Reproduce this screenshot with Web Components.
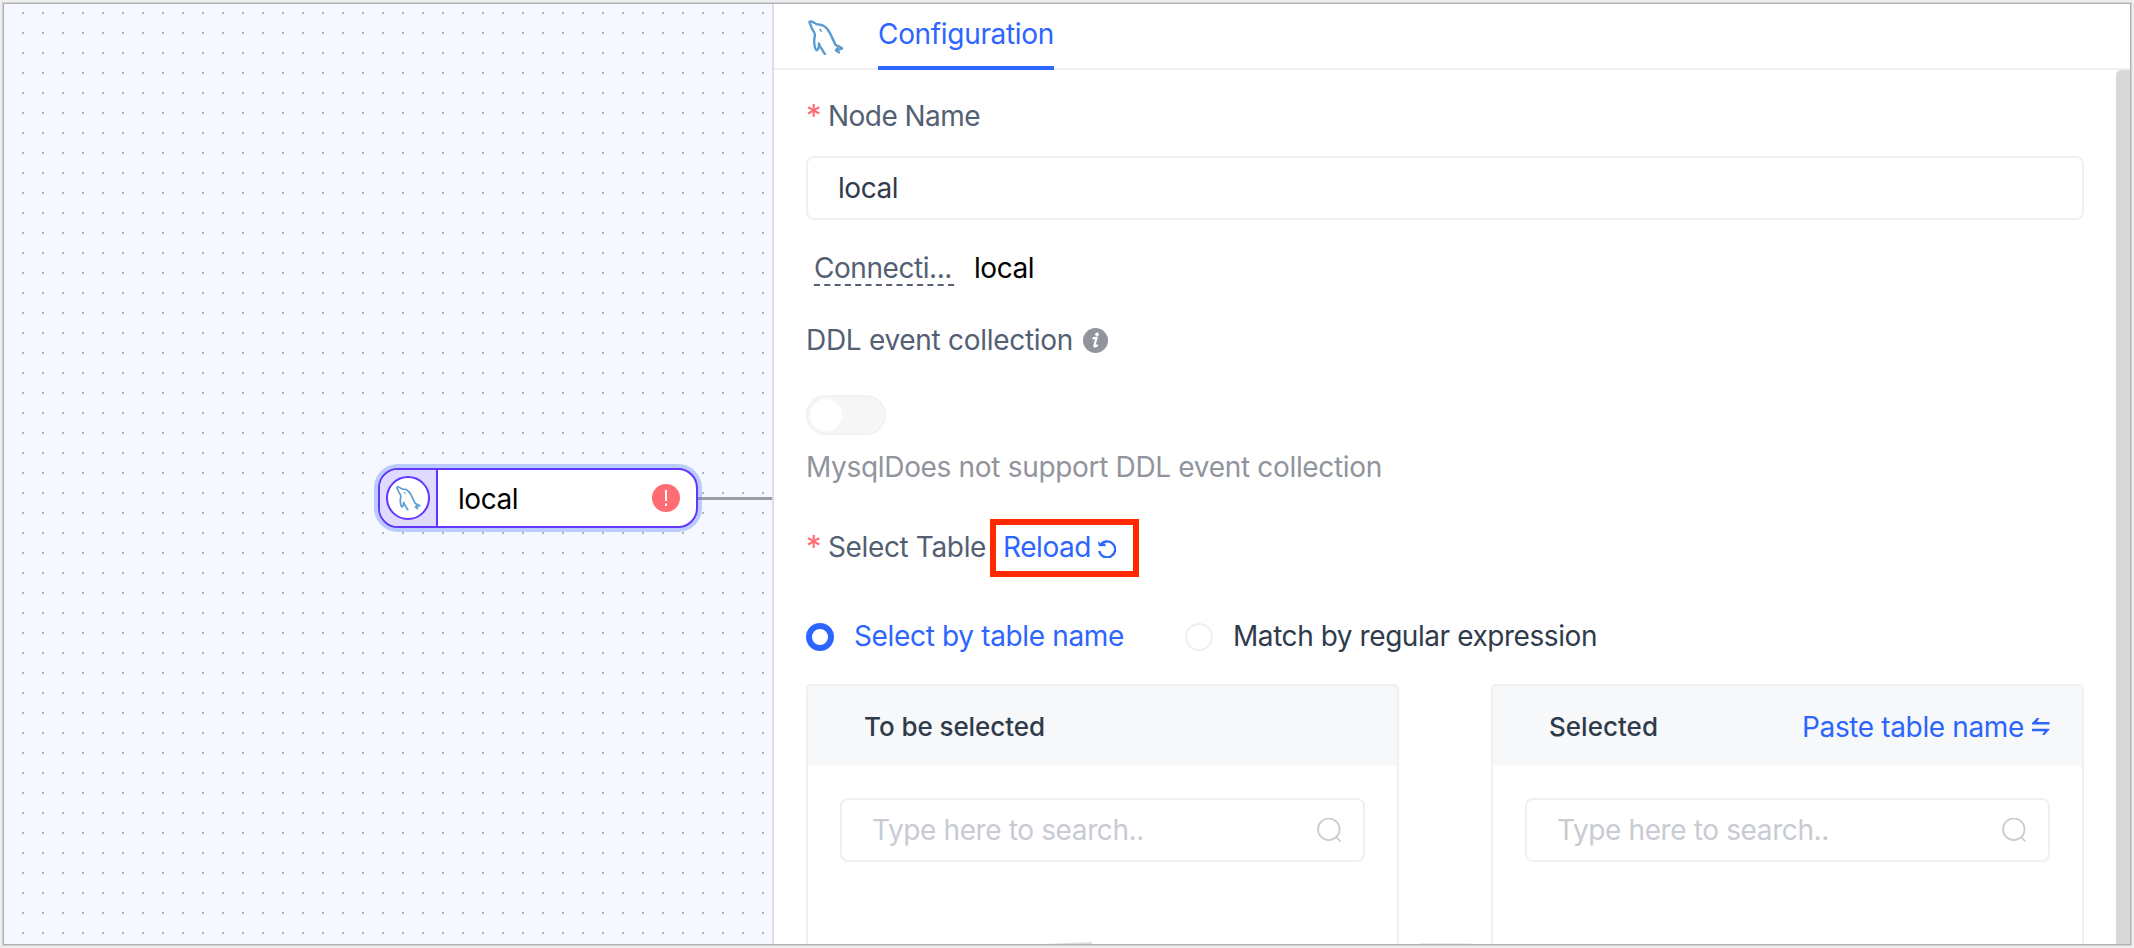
<!DOCTYPE html>
<html lang="en"><head><meta charset="utf-8"><title>Configuration</title>
<style>
html,body{margin:0;height:100%;background:#fff;overflow:hidden}
body{font-family:Inter,"Liberation Sans",sans-serif;font-size:28px;line-height:40px;color:#2f3b4c}
</style></head><body>
<flow-app></flow-app>
<script>
const define=(name,html,init)=>customElements.define(name,class extends HTMLElement{
  connectedCallback(){
    if(this.shadowRoot)return;
    const t=document.createElement('template');t.innerHTML=html;
    this.attachShadow({mode:'open'}).append(t.content.cloneNode(true));
    if(init)init.call(this,this.shadowRoot);
  }
});

/* Text run tracked so that its advance equals the "w" attribute. */
define('fit-text','<style>:host{display:block;white-space:pre;flex:none}span{display:inline-block}</style><span><slot></slot></span>',function(r){
  const s=r.querySelector('span'),w=+this.getAttribute('w');
  this.style.width=w+'px';
  s.style.letterSpacing=((w-s.getBoundingClientRect().width)/this.textContent.length)+'px';
});

define('mysql-icon',`<style>:host{display:block;width:36px;height:36px;flex:none}svg{display:block;width:100%;height:100%}</style>
<svg viewBox="0 0 36 36" fill="none" stroke="#5a9bd0" stroke-width="2.400" stroke-linejoin="round" stroke-linecap="round">
<path d="M34 28.3C32 26.5 30 26 27.600 25.200C25 20 23.500 15 20 10C17.500 6.300 15 4.900 12 4.700C9.500 4.700 8 4.500 6.500 3C4.500 1.300 2 1 1.500 1.800C1 3 3 5 3.500 7.500C4.200 10 6.700 12 6.900 14.500C7 17 6 18.500 6.200 21.500C6.400 25 6.500 28.500 8.500 30.200C10 30 11 27 11 23.500C11.800 26 12.500 28 14 29.200C15 31.500 16 33 17 34"/>
<path d="M34 28.500C31.500 29.500 29.500 30 28 30.200C29 31 30.500 32 31 32.500M28 30.200L29.500 28.300"/><path d="M12 9.300L13.300 11.200" stroke-width="1.500"/></svg>`);

define('search-icon',`<style>:host{display:block;width:24px;height:24px;flex:none}svg{display:block}</style>
<svg width="24" height="24" fill="none" stroke="#c8cbd2" stroke-width="1.7" stroke-linecap="round"><circle cx="11.800" cy="11.300" r="10.800"/><path d="M19.500 19.300L23 23"/></svg>`);

define('flow-node',`<style>
:host{display:flex;box-sizing:border-box;width:320px;height:60px;border:2px solid #6236ff;border-radius:20px;background:#fff;box-shadow:0 0 0 4px #b9cbff;align-items:center;color:#000}
.ic{box-sizing:border-box;width:58px;height:56px;border-right:2px solid #6236ff;background:#dfdaff;border-radius:18px 0 0 18px;display:flex;align-items:center;padding-left:6px}
.c{box-sizing:border-box;width:44px;height:44px;border:2px solid #6236ff;border-radius:50%;background:#fff;display:flex;align-items:center;justify-content:center}
mysql-icon{width:25px;height:25px}
.t{margin-left:20px;flex:1;padding-top:1px}
svg{display:block;margin-right:16px}
</style><div class="ic"><div class="c"><mysql-icon></mysql-icon></div></div><div class="t"><slot></slot></div>
<svg width="28" height="28"><circle cx="14" cy="14" r="14" fill="#ff6c72"/><path d="M14 6V17" stroke="#fff" stroke-width="2"/><rect x="13" y="19.500" width="2" height="2.500" fill="#fff"/></svg>`);

define('flow-canvas',`<style>
:host{display:block;position:relative;width:768px;flex:none;background:#f5f8fe;overflow:hidden}
svg{display:block}
flow-node{position:absolute;left:374px;top:464px}
i{position:absolute;left:694px;top:493px;width:74px;height:3px;background:#9a9da3}
b{position:absolute;left:694px;top:493px;width:4px;height:3px;background:#8794b8}
</style>
<svg width="768" height="940"><defs><pattern id="p" x="18" y="8" width="20" height="20" patternUnits="userSpaceOnUse"><rect width="2" height="2" fill="#b0b3b8"/></pattern></defs><rect width="768" height="940" fill="url(#p)"/></svg>
<flow-node><fit-text w="60">local</fit-text></flow-node><i></i><b></b>`);

define('form-label',`<style>:host{display:flex;height:40px;color:#535f72;align-items:center}.s{color:#ff6c72;width:22px;flex:none;display:none;font-size:31px}:host([required]) .s{display:block}</style><span class="s">*</span><slot></slot>`);

define('ui-input',`<style>:host{display:flex;box-sizing:border-box;height:64px;border:2px solid #f0f0f0;border-radius:8px;align-items:center;padding:0 22px 0 30px;justify-content:space-between;background:#fff}</style><slot></slot>`);

define('ui-switch',`<style>:host{display:flex;box-sizing:border-box;width:80px;height:40px;border-radius:20px;background:#f6f6f6;border:2px solid #f2f2f2;padding:2px}i{width:32px;height:32px;border-radius:50%;background:#fff}</style><i></i>`);

define('ui-radio',`<style>:host{display:flex;align-items:center;gap:20px;height:40px}i{box-sizing:border-box;width:28px;height:28px;border-radius:50%;border:2px solid #f0f0f0}.t{padding-bottom:2px}
:host([checked]){color:#2c65ff}:host([checked]) i{border:6px solid #2c65ff}</style><i></i><div class="t"><slot></slot></div>`);

define('info-icon',`<style>:host{display:block;width:25px;height:25px}svg{display:block}</style><svg width="25" height="25"><circle cx="12.500" cy="12.500" r="12.500" fill="#90949c"/><circle cx="14" cy="6.300" r="1.900" fill="#fff"/><path d="M9.500 10.300L13.600 9.800L11.400 17.800Q11.200 19.600 14.700 16.800" fill="none" stroke="#fff" stroke-width="2.200"/></svg>`);

define('reload-link',`<style>:host{display:flex;box-sizing:border-box;width:149px;height:58px;border:6px solid #ff2a00;margin-left:4px;padding:0 0 2px 7px;align-items:center;color:#2c65ff}svg{display:block;margin-left:7px;margin-top:4px}</style><slot></slot>
<svg width="18" height="18" fill="none" stroke="#2c65ff" stroke-width="2.300"><path d="M1.500 5H7.500"/><path d="M2.300 5.300A8 8 0 1 1 1.300 11"/><path d="M0 1L.8 6H5Z" fill="#2c65ff" stroke="none"/></svg>`);

define('transfer-panel',`<style>
:host{display:flex;flex-direction:column;box-sizing:border-box;width:593px;height:260px;border:2px solid #f0f0f0;border-bottom:0;border-radius:5px 5px 0 0}
header{height:80px;background:#f7f8fa;display:flex;align-items:center;justify-content:space-between;padding:2px 32px 0 56px;box-sizing:border-box;border-radius:3px 3px 0 0}
.t{font-size:26px;font-weight:500}.body{padding:32px;flex:1;display:flex;flex-direction:column;justify-content:space-between;padding-bottom:0}
.e{height:2px}</style>
<header><div class="t"><slot name="title"></slot></div><slot name="action"></slot></header>
<div class="body"><ui-input><fit-text w="272" style="color:#c8cbd2">Type here to search..</fit-text><search-icon></search-icon></ui-input><div class="e"><slot name="empty"></slot></div></div>`);

define('paste-link',`<style>:host{display:flex;align-items:center;color:#2c65ff;gap:8px}svg{display:block}</style><slot></slot>
<svg width="18" height="18" fill="#2c65ff"><path d="M0 5L5 0H7.300L5 4H17.500V6.500H0ZM17.500 11.500L12.500 17H10.200L12.500 13.300H0V10.800H17.500Z"/></svg>`);

define('config-panel',`<style>
:host{display:flex;flex-direction:column;flex:1;min-width:0;border-left:2px solid #dcdfe5;background:#fff}
nav{box-sizing:border-box;height:66px;border-bottom:2px solid #f0f0f0;display:flex;padding-left:34px;flex:none}
nav mysql-icon{margin-top:16px}
.tab{box-sizing:border-box;margin-left:34px;height:66px;border-bottom:4px solid #2c65ff;color:#2c65ff;padding-top:10px}
.main{flex:1;display:flex;justify-content:space-between;min-height:0}
form{width:1278px;margin-left:32px;display:flex;flex-direction:column;min-height:0}
.bar{width:14px;background:#d8d8d8;border-radius:5px 0 0 0}
.conn{display:flex;margin:28px 0 0 8px;height:40px;color:#000}
.conn div{box-sizing:border-box;width:140px;height:38px;border-bottom:2px dashed #535f72;color:#535f72;margin-right:20px}
.row{display:flex}
.transfer{display:flex;justify-content:space-between;margin-top:27px}
.btn{width:51px;height:1px;background:#eee;align-self:flex-end}
</style>
<nav><mysql-icon></mysql-icon><div class="tab"><fit-text w="176">Configuration</fit-text></div></nav>
<div class="main"><form>
<form-label required style="margin-top:26px"><fit-text w="152">Node Name</fit-text></form-label>
<ui-input style="margin-top:20px"><fit-text w="60">local</fit-text></ui-input>
<div class="conn"><div><fit-text w="138">Connecti...</fit-text></div><fit-text w="60">local</fit-text></div>
<form-label style="margin-top:32px"><fit-text w="267">DDL event collection</fit-text><info-icon style="margin-left:10px"></info-icon></form-label>
<ui-switch style="margin-top:35px"></ui-switch>
<fit-text w="576" style="color:#90949c;margin-top:12px">MysqlDoes not support DDL event collection</fit-text>
<form-label required style="margin-top:40px"><fit-text w="158">Select Table</fit-text><reload-link style="position:relative;top:1px"><fit-text w="88">Reload</fit-text></reload-link></form-label>
<div class="row" style="margin-top:50px"><ui-radio checked style="width:379px"><fit-text w="270">Select by table name</fit-text></ui-radio><ui-radio><fit-text w="364">Match by regular expression</fit-text></ui-radio></div>
<div class="transfer">
<transfer-panel><fit-text slot="title" w="181">To be selected</fit-text><svg slot="empty" width="60" height="2" style="display:block;margin-left:204px"><path d="M0 2L48 0V2Z" fill="#ddd"/></svg></transfer-panel>
<div class="btn"></div>
<transfer-panel><fit-text slot="title" w="109">Selected</fit-text><paste-link slot="action"><fit-text w="222">Paste table name</fit-text></paste-link></transfer-panel>
</div></form><div class="bar"></div></div>`);

define('flow-app',`<style>:host{display:flex;box-sizing:border-box;width:2134px;height:948px;padding:4px;background:#eeeeef}
.w{display:flex;flex:1;min-width:0;box-shadow:0 0 0 1px #b0b0b2,0 0 0 2px #d2d2d4}</style><div class="w"><flow-canvas></flow-canvas><config-panel></config-panel></div>`);
</script></body></html>
